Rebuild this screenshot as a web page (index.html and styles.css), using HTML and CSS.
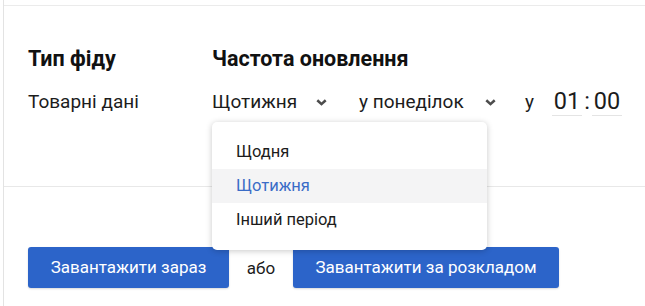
FILE: index.html
```html
<!DOCTYPE html>
<html lang="uk">
    <head>
        <meta charset="UTF-8">
        <title>Фід</title>
        <link rel="stylesheet" href="styles.css">
    </head>
    <body>
        <section class="panel">
            <div class="panel_top"></div>
            <div class="panel_body">
                <div class="feed">
                    <div class="feed_col feed_col--type">
                        <h2 class="feed_heading">Тип фіду</h2>
                        <div class="feed_row">Товарні дані</div>
                    </div>
                    <div class="feed_col">
                        <h2 class="feed_heading">Частота оновлення</h2>
                        <div class="feed_row">
                            <div class="select select--period">
                                <span class="select_value">Щотижня</span>
                                <svg class="select_chevron" width="11" height="7" viewBox="0 0 11 7"><path d="M1.3 1.3l4.2 3.8 4.2-3.8" fill="none" stroke="#4d4d4d" stroke-width="2.6"/></svg>
                                <ul class="menu" role="list">
                                    <li class="menu_item">Щодня</li>
                                    <li class="menu_item menu_item--active">Щотижня</li>
                                    <li class="menu_item">Інший період</li>
                                </ul>
                            </div>
                            <div class="select select--day">
                                <span class="select_value">у понеділок</span>
                                <svg class="select_chevron" width="11" height="7" viewBox="0 0 11 7"><path d="M1.3 1.3l4.2 3.8 4.2-3.8" fill="none" stroke="#4d4d4d" stroke-width="2.6"/></svg>
                            </div>
                            <span class="at">у</span>
                            <div class="time">
                                <span class="time_field">01</span>
                                <span class="time_sep">:</span>
                                <span class="time_field">00</span>
                            </div>
                        </div>
                    </div>
                </div>
            </div>
            <div class="panel_actions">
                <a href="#now" class="btn">Завантажити зараз</a>
                <span class="or">або</span>
                <a href="#schedule" class="btn btn--wide">Завантажити за розкладом</a>
            </div>
        </section>
    </body>
</html>
```

FILE: styles.css
```css
* {
    box-sizing: border-box;
    margin: 0;
    padding: 0;
}

html,
body {
    height: 100%;
}

body {
    font-family: Roboto, "Liberation Sans", sans-serif;
    font-size: 19px;
    color: #1c1c1c;
    background-color: #fff;
    overflow: hidden;
}

ul {
    list-style: none;
}

.panel {
    margin-left: 3px;
    min-height: 100%;
    border-left: 1px solid #e3e3e3;
}

.panel_top {
    height: 6px;
    border-bottom: 1px solid #ebebeb;
}

.panel_body {
    height: 181px;
    padding: 40px 0 0 24px;
    border-bottom: 1px solid #e8e8e8;
}

.feed {
    display: flex;
}

.feed_col--type {
    width: 184px;
}

.feed_heading {
    font-size: 21.5px;
    font-weight: 700;
    line-height: 25px;
    color: #111;
    margin-bottom: 16px;
}

.feed_row {
    display: flex;
    align-items: center;
    height: 29px;
    line-height: 29px;
}

.select {
    position: relative;
    display: flex;
    align-items: center;
}

.select--period {
    width: 147px;
}

.select--day {
    width: 166px;
}

.select_chevron {
    margin-left: 19px;
    margin-top: 1px;
}

.select--day .select_chevron {
    margin-left: 21px;
}

.at {
    margin-right: 18px;
}

.time {
    display: flex;
    font-size: 23.5px;
    line-height: 28px;
}

.time_field {
    width: 30px;
    text-align: center;
    border-bottom: 1px solid #e4e4e4;
}

.time_sep {
    width: 10px;
    text-align: center;
}

.menu {
    position: absolute;
    top: 35px;
    left: 0;
    z-index: 2;
    width: 275px;
    padding: 13px 0;
    font-size: 16.5px;
    background-color: #fff;
    border-radius: 5px;
    box-shadow: 0 1px 6px rgba(0, 0, 0, 0.22);
}

.menu_item {
    height: 34px;
    line-height: 34px;
    padding-left: 24px;
    color: #1c1c1c;
}

.menu_item--active {
    background-color: #f4f4f5;
    color: #3a6cc7;
}

.panel_actions {
    display: flex;
    align-items: center;
    padding: 60px 0 0 24px;
}

.btn {
    display: block;
    width: 201px;
    height: 41px;
    line-height: 41px;
    font-size: 17px;
    text-align: center;
    color: #fff;
    text-decoration: none;
    background-color: #2c64c9;
    border-radius: 3px;
    box-shadow: 0 1px 2px rgba(0, 0, 0, 0.15);
}

.btn--wide {
    width: 266px;
}

.or {
    width: 64px;
    font-size: 17px;
    text-align: center;
}
```
